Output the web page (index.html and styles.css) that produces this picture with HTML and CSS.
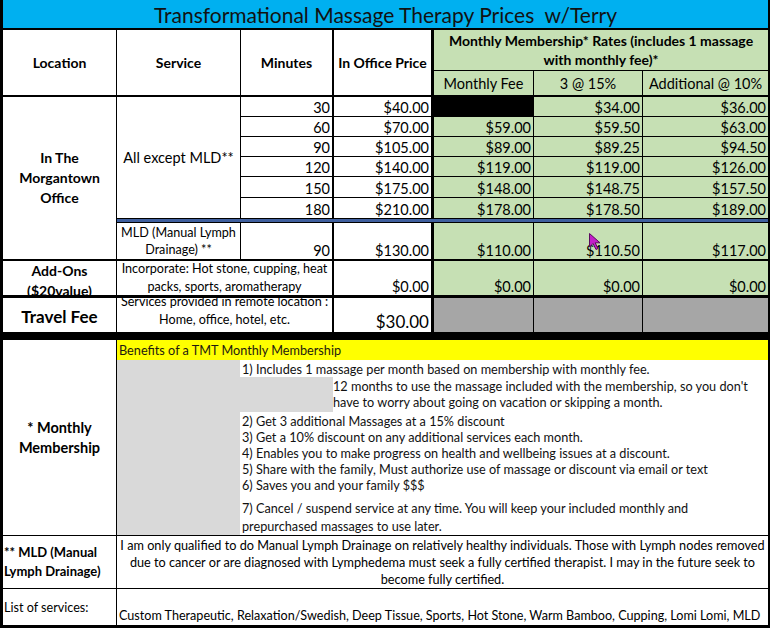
FILE: index.html
```html
<!DOCTYPE html>
<html>
<head>
<meta charset="utf-8">
<title>TMT Prices</title>
<link rel="stylesheet" href="styles.css">
</head>
<body>
<div class="sheet">
  <div class="title">Transformational Massage Therapy Prices&nbsp; w/Terry</div>

  <div class="prices">
    <div class="c hd">Location</div>
    <div class="c hd">Service</div>
    <div class="c hd k3">Minutes</div>
    <div class="c hd k4">In Office Price</div>
    <div class="c mem g k7">Monthly Membership* Rates (includes 1 massage<br>with monthly fee)*</div>
    <div class="c sub g">Monthly Fee</div>
    <div class="c sub g">3 @ 15%</div>
    <div class="c sub g k7">Additional @ 10%</div>

    <div class="c office b2">In The<br>Morgantown<br>Office</div>
    <div class="c allx">All except MLD**</div>
    <div class="c num k3">30</div><div class="c num k4">$40.00</div><div class="c num blk"></div><div class="c num g">$34.00</div><div class="c num g k7">$36.00</div>
    <div class="c num k3">60</div><div class="c num k4">$70.00</div><div class="c num g">$59.00</div><div class="c num g">$59.50</div><div class="c num g k7">$63.00</div>
    <div class="c num k3">90</div><div class="c num k4">$105.00</div><div class="c num g">$89.00</div><div class="c num g">$89.25</div><div class="c num g k7">$94.50</div>
    <div class="c num k3">120</div><div class="c num k4">$140.00</div><div class="c num g">$119.00</div><div class="c num g">$119.00</div><div class="c num g k7">$126.00</div>
    <div class="c num k3">150</div><div class="c num k4">$175.00</div><div class="c num g">$148.00</div><div class="c num g">$148.75</div><div class="c num g k7">$157.50</div>
    <div class="c num k3">180</div><div class="c num k4">$210.00</div><div class="c num g">$178.00</div><div class="c num g">$178.50</div><div class="c num g k7">$189.00</div>

    <div class="spacer"></div>

    <div class="c small b2">MLD (Manual Lymph<br>Drainage) **</div>
    <div class="c num k3 b2">90</div><div class="c num k4 b2">$130.00</div><div class="c num g b2">$110.00</div><div class="c num g b2">$110.50</div><div class="c num g k7 b2">$117.00</div>

    <div class="c addl b3">Add-Ons<br>($20value)</div>
    <div class="c small addt k3 b3">Incorporate: Hot stone, cupping, heat<br>packs, sports, aromatherapy</div>
    <div class="c num k4 b3">$0.00</div><div class="c num g b3">$0.00</div><div class="c num g b3">$0.00</div><div class="c num g k7 b3">$0.00</div>

    <div class="c travl b0">Travel Fee</div>
    <div class="c small travt k3 b0">Services provided in remote location :<br>Home, office, hotel, etc.</div>
    <div class="c num big k4 b0">$30.00</div><div class="c gray b0"></div><div class="c gray b0"></div><div class="c gray k7 b0"></div>
  </div>

  <div class="band"></div>

  <div class="memb">
    <div class="memb-l">* Monthly<br>Membership</div>
    <div class="memb-r">
      <div class="yellow">Benefits of a TMT Monthly Membership</div>
      <div class="shade shade-col"></div>
      <div class="ln wide">1) Includes 1 massage per month based on membership with monthly fee.</div>
      <div class="shade"></div>
      <div class="ln narrow two">12 months to use the massage included with the membership, so you don't<br>have to worry about going on vacation or skipping a month.</div>
      <div class="ln wide">2) Get 3 additional Massages at a 15% discount</div>
      <div class="ln wide">3) Get a 10% discount on any additional services each month.</div>
      <div class="ln wide">4) Enables you to make progress on health and wellbeing issues at a discount.</div>
      <div class="ln wide">5) Share with the family, Must authorize use of massage or discount via email or text</div>
      <div class="ln wide">6) Saves you and your family $$$</div>
      <div class="ln wide last">7) Cancel / suspend service at any time. You will keep your included monthly and<br>prepurchased massages to use later.</div>
    </div>
  </div>

  <div class="mlds">
    <div class="mlds-l">** MLD (Manual<br>Lymph Drainage)</div>
    <div class="mlds-r">I am only qualified to do Manual Lymph Drainage on relatively healthy individuals. Those with Lymph nodes removed<br>due to cancer or are diagnosed with Lymphedema must seek a fully certified therapist. I may in the future seek to<br>become fully certified.</div>
  </div>

  <div class="list">
    <div class="list-l">List of services:</div>
    <div class="list-r">Custom Therapeutic, Relaxation/Swedish, Deep Tissue, Sports, Hot Stone, Warm Bamboo, Cupping, Lomi Lomi, MLD</div>
  </div>

  <svg class="cursor" width="13" height="18" viewBox="0 0 13 18">
    <polygon points="0.5,0.5 0.5,14 4,10.5 7,16.5 9,15.5 6.2,9.8 11,9.8" fill="#c21fc9" stroke="#5a0a5e" stroke-width="1"/>
  </svg>
</div>
</body>
</html>
```

FILE: styles.css
```css
* { box-sizing: border-box; }

body {
  margin: 0;
  background: #fff;
  font-family: Lato, "Open Sans", sans-serif;
  color: #000;
}

.sheet {
  position: relative;
  width: 770px;
  height: 628px;
  border-left: 3px solid #000;
  border-right: 2px solid #000;
  border-bottom: 3px solid #000;
  overflow: hidden;
}

.title {
  height: 30px;
  background: #00b0f0;
  border-bottom: 2px solid #000;
  text-align: center;
  font-size: 21px;
  line-height: 29px;
  color: #121212;
}

/* price grid */
.prices {
  display: grid;
  grid-template-columns: 114px 124px 93px 100px 100px 109px 125px;
  grid-template-rows: 41px 26px 20px 20px 20px 20px 21px 21px 4px 38px 37px 34px;
  font-size: 14.5px;
}

.c {
  display: flex;
  overflow: hidden;
  border-right: 1px solid #000;
  border-bottom: 1px solid #000;
}

.k3 { border-right-width: 2px; }
.k4 { border-right-width: 3px; }
.k7 { border-right: 0; }
.b2 { border-bottom-width: 2px; }
.b3 { border-bottom-width: 3px; }
.b0 { border-bottom: 0; }

.g { background: #c6e0b4; }
.blk { background: #000; }
.gray { background: #a6a6a6; }

.hd {
  grid-row: span 2;
  align-items: center;
  justify-content: center;
  font-weight: 700;
  font-size: 14px;
  border-bottom-width: 2px;
}

.mem {
  grid-column: span 3;
  align-items: center;
  justify-content: center;
  text-align: center;
  font-weight: 700;
  font-size: 14px;
  line-height: 19px;
}

.sub {
  align-items: center;
  justify-content: center;
  border-bottom-width: 2px;
}

.num {
  align-items: flex-end;
  justify-content: flex-end;
  padding-right: 2px;
  line-height: 17px;
}

.office {
  grid-row: span 8;
  align-items: center;
  justify-content: center;
  text-align: center;
  font-weight: 700;
  font-size: 14px;
  line-height: 20px;
}

.allx {
  grid-row: span 6;
  align-items: center;
  justify-content: center;
}

.spacer {
  grid-column: span 6;
  background: #3f5f9e;
  border-bottom: 1px solid #000;
}

.small {
  font-size: 12.6px;
  align-items: center;
  justify-content: center;
  text-align: center;
  line-height: 17px;
  white-space: nowrap;
}

.addl {
  align-items: center;
  justify-content: center;
  text-align: center;
  font-weight: 700;
  font-size: 14px;
  line-height: 20px;
  padding-top: 6px;
}

.addt {
  grid-column: span 2;
  line-height: 18px;
}

.travl {
  align-items: center;
  justify-content: center;
  font-weight: 700;
  font-size: 17px;
  padding-top: 2px;
}

.travt {
  grid-column: span 2;
  align-items: flex-end;
  line-height: 18px;
  padding-bottom: 3px;
}

.big {
  font-size: 17px;
  line-height: 20px;
}

.band {
  height: 8px;
  background: #000;
}

/* membership */
.memb {
  display: flex;
  height: 196px;
  border-bottom: 1px solid #000;
}

.memb-l {
  width: 114px;
  flex: none;
  border-right: 1px solid #000;
  display: flex;
  align-items: center;
  justify-content: center;
  text-align: center;
  font-weight: 700;
  font-size: 14.5px;
  line-height: 20px;
}

.memb-r {
  flex: 1;
  display: grid;
  grid-template-columns: 123px 93px 1fr;
  grid-template-rows: 20px 17px 35px 17px 16px 16px 16px 16px 42px;
  font-size: 12.7px;
  color: #111;
}

.yellow {
  grid-column: 1 / -1;
  background: #ffff00;
  padding-left: 2px;
  display: flex;
  align-items: center;
  color: #1e1a10;
}

.shade { background: #d9d9d9; }
.shade-col { grid-row: 2 / -1; grid-column: 1; }

.ln {
  display: flex;
  align-items: flex-end;
  line-height: 16px;
  white-space: nowrap;
}

.wide { grid-column: 2 / 4; padding-left: 2px; }
.narrow { grid-column: 3; }
.two { padding-bottom: 2px; }
.last { line-height: 18px; padding-bottom: 0; }

/* MLD note */
.mlds {
  display: flex;
  height: 53px;
  border-bottom: 1px solid #000;
}

.mlds-l {
  width: 114px;
  flex: none;
  border-right: 1px solid #000;
  display: flex;
  align-items: center;
  padding-left: 1px;
  font-weight: 700;
  font-size: 13px;
  line-height: 19px;
}

.mlds-r {
  flex: 1;
  text-align: center;
  font-size: 12.7px;
  line-height: 17px;
  padding-top: 1px;
  white-space: nowrap;
}

/* list */
.list {
  display: flex;
  height: 36px;
}

.list-l {
  width: 114px;
  flex: none;
  border-right: 1px solid #000;
  display: flex;
  align-items: center;
  padding-left: 1px;
  font-size: 12.6px;
}

.list-r {
  flex: 1;
  display: flex;
  align-items: flex-end;
  padding-left: 2px;
  padding-bottom: 1px;
  font-size: 12.6px;
  line-height: 17px;
  white-space: nowrap;
}

.cursor {
  position: absolute;
  left: 586px;
  top: 233px;
}
```
